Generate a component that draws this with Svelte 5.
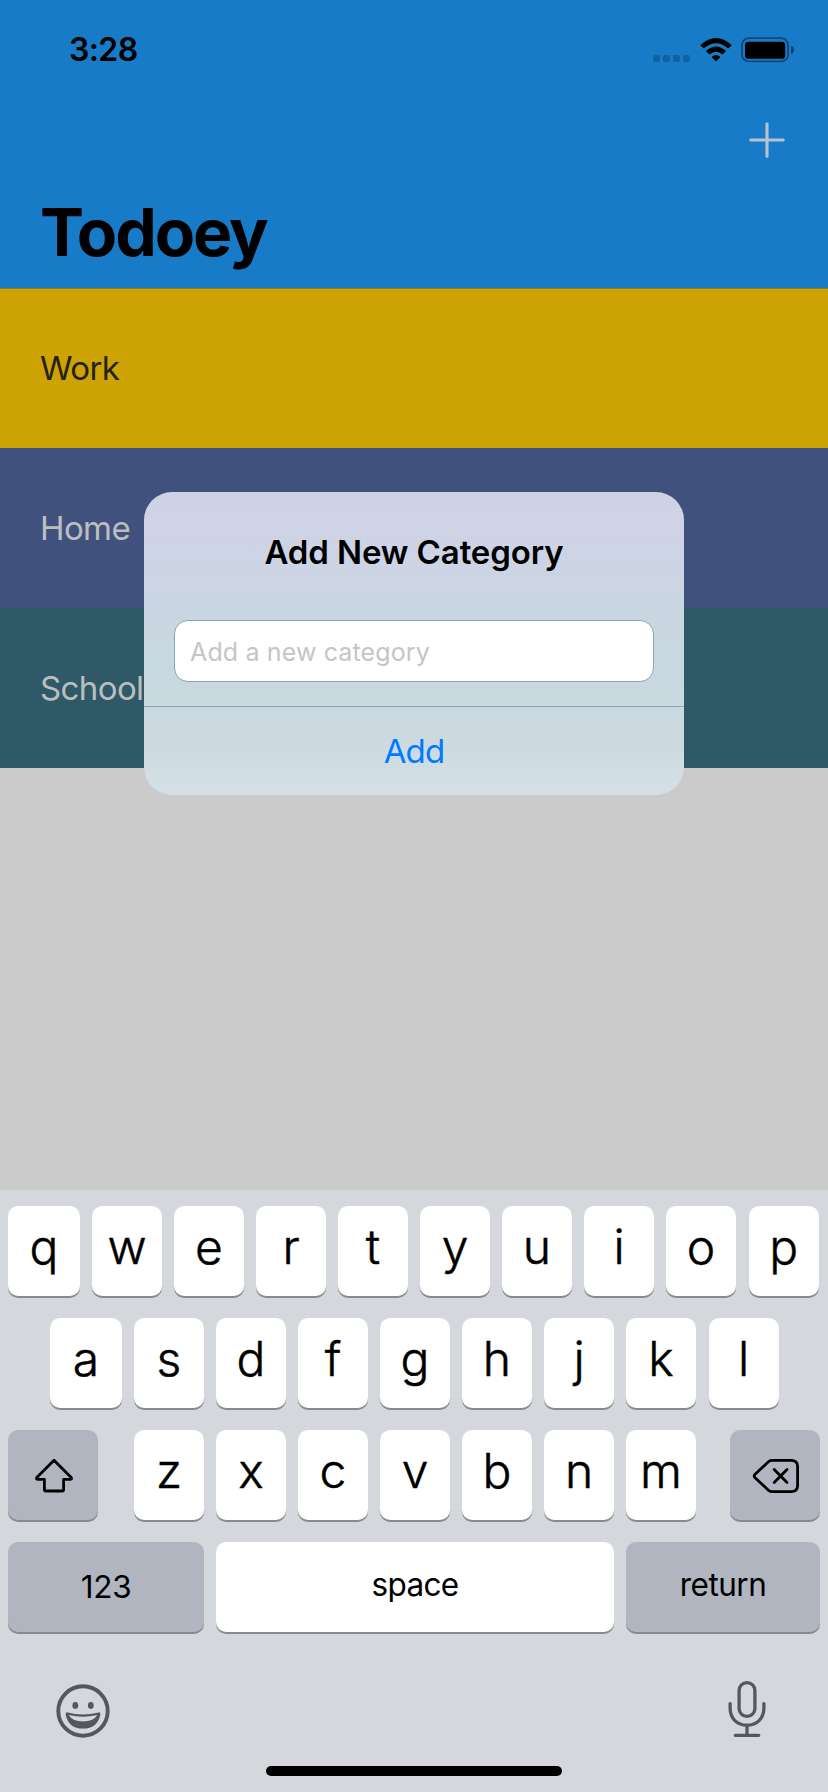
<script>
  const categories = [
    { name: 'Work', bg: '#cca303', fg: '#23221c' },
    { name: 'Home', bg: '#41517e', fg: '#bdbebf' },
    { name: 'School', bg: '#2f5966', fg: '#b9bfc0' }
  ];
  const topRow = 'qwertyuiop'.split('');
  const homeRow = 'asdfghjkl'.split('');
  const bottomRow = 'zxcvbnm'.split('');
</script>

<div class="screen">
  <header>
    <div class="status">
      <span class="time">3:28</span>
      <div class="indicators">
        <div class="dots"><i></i><i></i><i></i><i></i></div>
        <svg class="wifi" width="34" height="26" viewBox="0 0 34 26">
          <path d="M1.2 8.2Q17-6.2 32.8 8.2L29.2 11.6Q17 .8 4.8 11.6Z" />
          <path d="M6.9 14.1Q17 4.9 27.1 14.1L23.5 17.6Q17 11.8 10.5 17.6Z" />
          <path d="M12.6 20Q17 16.2 21.4 20L17 24.5Z" />
        </svg>
        <svg class="battery" width="54" height="26" viewBox="0 0 54 26">
          <rect x="1.9" y="1.2" width="46.2" height="23.2" rx="7" fill="none" stroke="#000" stroke-opacity=".4" stroke-width="1.8" />
          <rect x="5" y="4.8" width="40.2" height="17" rx="3.4" />
          <path d="M51 8.8Q54 10 54 12.9Q54 15.8 51 17Z" fill-opacity=".5" />
        </svg>
      </div>
    </div>
    <div class="nav">
      <svg width="36" height="36" viewBox="0 0 36 36" aria-label="New">
        <path d="M18 1.8V34.2M1.8 18H34.2" fill="none" stroke="#b4c3cf" stroke-width="3.1" stroke-linecap="round" />
      </svg>
    </div>
    <h1>Todoey</h1>
  </header>

  <main>
    {#each categories as c}
      <div class="row" style="background:{c.bg};color:{c.fg}">{c.name}</div>
    {/each}
  </main>

  <section class="keyboard">
    <div class="keys ten">
      {#each topRow as k}<div class="key">{k}</div>{/each}
    </div>
    <div class="keys nine">
      {#each homeRow as k}<div class="key">{k}</div>{/each}
    </div>
    <div class="keys seven">
      <div class="key dark icon">
        <svg width="40" height="36" viewBox="0 0 40 36">
          <path d="M20 2.2L37.2 19.4Q38.3 21.2 36.4 21.3H29.6V31.4Q29.6 33 28 33H12Q10.4 33 10.4 31.4V21.3H3.6Q1.7 21.2 2.8 19.4Z" fill="none" stroke="#000" stroke-width="2.8" stroke-linejoin="round" />
        </svg>
      </div>
      <div class="letters">
        {#each bottomRow as k}<div class="key">{k}</div>{/each}
      </div>
      <div class="key dark icon">
        <svg width="48" height="36" viewBox="0 0 48 36">
          <path d="M19.6 2.4H39.2Q45.6 2.4 45.6 8.8V27.2Q45.6 33.6 39.2 33.6H19.6Q17.8 33.6 16.4 32.2L2.8 19.4Q1.6 18 2.8 16.6L16.4 3.8Q17.8 2.4 19.6 2.4Z" fill="none" stroke="#000" stroke-width="2.8" stroke-linejoin="round" />
          <path d="M22.2 11.6L35 24.4M35 11.6L22.2 24.4" fill="none" stroke="#000" stroke-width="2.8" stroke-linecap="round" />
        </svg>
      </div>
    </div>
    <div class="keys wide">
      <div class="key dark num">123</div>
      <div class="key word">space</div>
      <div class="key dark word ret">return</div>
    </div>
    <div class="tools">
      <svg class="emoji" width="54" height="54" viewBox="0 0 54 54">
        <circle cx="27" cy="27" r="24.7" fill="none" stroke="#53585d" stroke-width="3.9" />
        <ellipse cx="19.3" cy="21.4" rx="2.9" ry="3.4" fill="#53585d" />
        <ellipse cx="34.8" cy="21.4" rx="2.9" ry="3.4" fill="#53585d" />
        <path fill="#53585d" fill-rule="evenodd" d="M11.5 28.4Q27 32.6 42.5 28.4Q44.6 28.1 44.4 30.4Q41.4 44.6 27 44.6Q12.6 44.6 9.6 30.4Q9.4 28.1 11.5 28.4ZM12.7 31Q16.5 37.5 27 37.5Q37.5 37.5 41.3 31Q27 34.3 12.7 31Z" />
      </svg>
      <svg width="40" height="58" viewBox="0 0 40 58">
        <g fill="none" stroke="#53585d" stroke-width="3.3" stroke-linecap="round">
          <rect x="12.1" y="2.6" width="15.8" height="33.8" rx="7.9" />
          <path d="M3.1 23.6V28C3.1 38.6 10.2 45.2 20 45.2S36.9 38.6 36.9 28V23.6M20 45.2V55M8.3 55.3H31.7" />
        </g>
      </svg>
    </div>
    <div class="home"></div>
  </section>

  <div class="dialog">
    <h2>Add New Category</h2>
    <div class="field">Add a new category</div>
    <div class="action">Add</div>
  </div>
</div>

<style>
  :global(body) { margin: 0; }
  .screen {
    position: relative;
    width: 828px;
    height: 1792px;
    display: flex;
    flex-direction: column;
    overflow: hidden;
    background: #cbcbcb;
    color: #000;
    font-family: Inter, "Liberation Sans", sans-serif;
  }
  header {
    height: 288px;
    box-sizing: border-box;
    background: #187bc7;
  }
  .status {
    height: 99px;
    display: flex;
    align-items: center;
    justify-content: space-between;
    padding: 0 34px 0 69px;
  }
  .time { font-size: 32px; font-weight: 600; letter-spacing: -.6px; }
  .indicators { display: flex; }
  .dots { display: flex; gap: 3px; align-items: flex-end; margin: 0 9px 1px 0; }
  .dots i { width: 7px; height: 7px; border-radius: 2px; background: rgba(0, 0, 0, .2); }
  .wifi { margin-right: 7px; }
  .nav { height: 83px; box-sizing: border-box; display: flex; justify-content: flex-end; align-items: center; padding: 0 43.5px 1px 0; }
  h1 {
    margin: 0;
    padding-left: 40px;
    font-size: 66px;
    line-height: 100px;
    font-weight: 700;
    letter-spacing: -2.1px;
  }
  main { flex: 1; }
  .row {
    height: 160px;
    line-height: 160px;
    padding-left: 40px;
    font-size: 33px;
    letter-spacing: -.6px;
  }
  .row:first-child { box-shadow: inset 0 1px #8c7d2c; }
  .keyboard {
    height: 602px;
    box-sizing: border-box;
    padding: 16px 8px 0;
    background: #d4d7dc;
    display: flex;
    flex-direction: column;
  }
  .keys { display: flex; gap: 12px; height: 90px; margin-bottom: 22px; }
  .key {
    width: 70px;
    height: 90px;
    box-sizing: border-box;
    padding-bottom: 9px;
    flex: none;
    display: flex;
    align-items: center;
    justify-content: center;
    border-radius: 10px;
    background: #fff;
    box-shadow: 0 2px #898a8d;
    font-size: 48px;
    font-weight: 300;
    -webkit-text-stroke: .5px #000;
  }
  .ten .key:first-child, .nine .key:first-child { width: 72px; }
  .ten .key:last-child, .nine .key:last-child { margin-left: .6px; }
  .nine { padding-left: 42px; }
  .seven { justify-content: space-between; }
  .letters { display: flex; gap: 12px; margin-left: 2px; }
  .key.dark { background: #b1b5bf; }
  .key.icon { width: 90px; padding: 1px 0 0 1px; }
  .wide .key { width: 194px; font-weight: 400; -webkit-text-stroke: 0; }
  .wide .num { width: 196px; font-size: 31.5px; padding: 0 0 1px; letter-spacing: -.3px; }
  .wide .word { width: 398px; font-size: 31.5px; padding: 0 0 5px; letter-spacing: -.7px; }
  .wide .ret { width: 194px; letter-spacing: -.5px; }
  .tools {
    display: flex;
    justify-content: space-between;
    align-items: center;
    height: 58px;
    padding: 26px 53.5px 0 47.5px;
  }
  .emoji { margin-top: 4px; }
  .home {
    width: 296px;
    height: 10px;
    margin: 28px auto 0;
    border-radius: 5px;
    background: #000;
  }
  .dialog {
    position: absolute;
    left: 144px;
    top: 492px;
    width: 540px;
    height: 303px;
    border-radius: 28px;
    background: linear-gradient(#cfd2e7 0, #cdd4e5 22%, #c9d6e1 42%, #c9d8df 65%, #cddbe0 85%, #d4e0e5 100%);
    overflow: hidden;
  }
  h2 {
    margin: 0;
    padding-top: 40px;
    height: 88px;
    line-height: 40px;
    text-align: center;
    font-size: 33px;
    font-weight: 600;
    letter-spacing: -.12px;
  }
  .field {
    box-sizing: border-box;
    margin: 0 30px 24px;
    height: 62px;
    padding-left: 15px;
    line-height: 62px;
    border: 1px solid #8aa4b5;
    border-radius: 14px;
    background: #fff;
    color: #c5c5c7;
    font-size: 25px;
    letter-spacing: .13px;
  }
  .action {
    height: 88px;
    line-height: 88px;
    border-top: 1px solid #8aa6b3;
    text-align: center;
    font-size: 33px;
    letter-spacing: -.9px;
    color: #007aff;
  }
</style>
